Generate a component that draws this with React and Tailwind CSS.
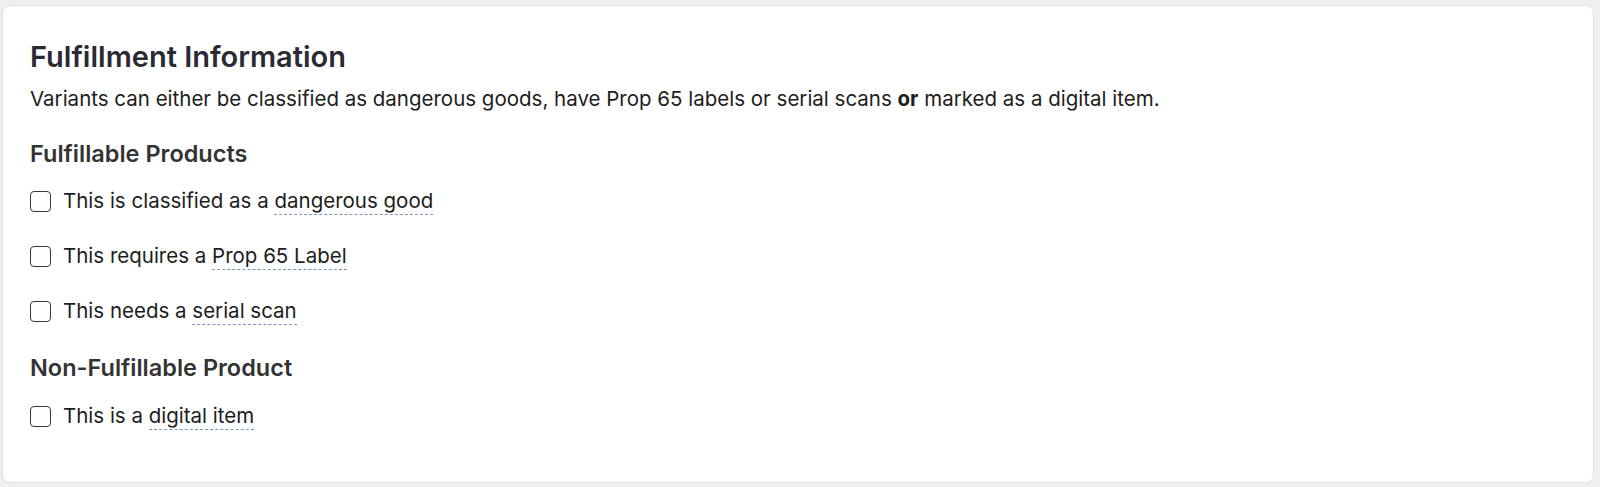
import React from 'react';

const font = { fontFamily: '"Inter", "Liberation Sans", sans-serif' };

const Term = ({ children }) => (
  <span className="border-b border-dashed border-[#7a94c4] pb-[1px]">{children}</span>
);

const CheckRow = ({ lead, term }) => (
  <label className="flex items-center gap-[12px] h-[26px] cursor-pointer">
    <span className="w-[21px] h-[21px] rounded-[4px] border-[1.5px] border-[#3a3a3a] bg-white shrink-0" />
    <span className="text-[20.5px] leading-[26px] text-[#1d1d1d]">
      {lead} <Term>{term}</Term>
    </span>
  </label>
);

const App = () => {
  return (
    <div className="w-[1600px] h-[487px] bg-[#efefef] pt-[5px] pl-[2px] pr-[6px]" style={font}>
      <div className="h-[478px] bg-white border border-[#e0e0e0] rounded-[8px] pt-[34px] px-[27px]">
        {/* Header */}
        <h2 className="text-[29px] leading-[34px] font-semibold text-[#2a2a35]">Fulfillment Information</h2>
        <p className="mt-[12px] text-[20.5px] leading-[26px] text-[#1d1d1d]">
          Variants can either be classified as dangerous goods, have Prop 65 labels or serial scans{' '}
          <b className="font-bold">or</b> marked as a digital item.
        </p>

        {/* Fulfillable */}
        <h3 className="mt-[29px] text-[23.5px] leading-[26px] font-semibold text-[#333]">Fulfillable Products</h3>
        <div className="mt-[21px] flex flex-col gap-[29px]">
          <CheckRow lead="This is classified as a" term="dangerous good" />
          <CheckRow lead="This requires a" term="Prop 65 Label" />
          <CheckRow lead="This needs a" term="serial scan" />
        </div>

        {/* Non-fulfillable */}
        <h3 className="mt-[31px] text-[23.5px] leading-[26px] font-semibold text-[#333]">Non-Fulfillable Product</h3>
        <div className="mt-[22px]">
          <CheckRow lead="This is a" term="digital item" />
        </div>
      </div>
    </div>
  );
};

export default App;
